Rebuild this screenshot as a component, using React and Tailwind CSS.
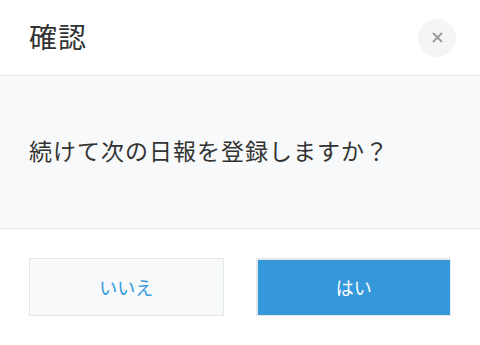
export default function App() {
  const font = { fontFamily: '"Noto Sans CJK JP", "Noto Sans", sans-serif' };
  return (
    <div className="w-[480px] h-[345px] bg-white text-[#333333] overflow-hidden" style={font}>
      <div className="h-[76px] flex items-center justify-between pl-[29px] pr-[24px] border-b border-[#e3e7e8]">
        <h1 className="text-[28px] leading-none tracking-[1px] mt-[-4px]">確認</h1>
        <button className="w-[38px] h-[38px] rounded-full bg-[#f4f5f7] flex items-center justify-center text-[#999999]">
          <svg width="11" height="11" viewBox="0 0 11 11" fill="none" stroke="currentColor" strokeWidth="1.8" strokeLinecap="round">
            <path d="M1.5 1.5L9.5 9.5M9.5 1.5L1.5 9.5" />
          </svg>
        </button>
      </div>
      <div className="h-[153px] bg-[#f7f9fa] border-b border-[#e3e7e8] flex items-center pl-[29px]">
        <p className="text-[23px] leading-none tracking-[1px] mt-[-4px]">続けて次の日報を登録しますか？</p>
      </div>
      <div className="flex gap-8 px-[29px] pt-[29px]">
        <button className="flex-1 h-[58px] bg-[#f7f9fa] border border-[#e3e7e8] text-[#3498db] text-[18px] flex items-center justify-center">
          いいえ
        </button>
        <button className="flex-1 h-[58px] bg-[#3598db] border-t-2 border-l-2 border-r border-b border-[#e3e7e8] text-white text-[18px] flex items-center justify-center">
          はい
        </button>
      </div>
    </div>
  );
}
